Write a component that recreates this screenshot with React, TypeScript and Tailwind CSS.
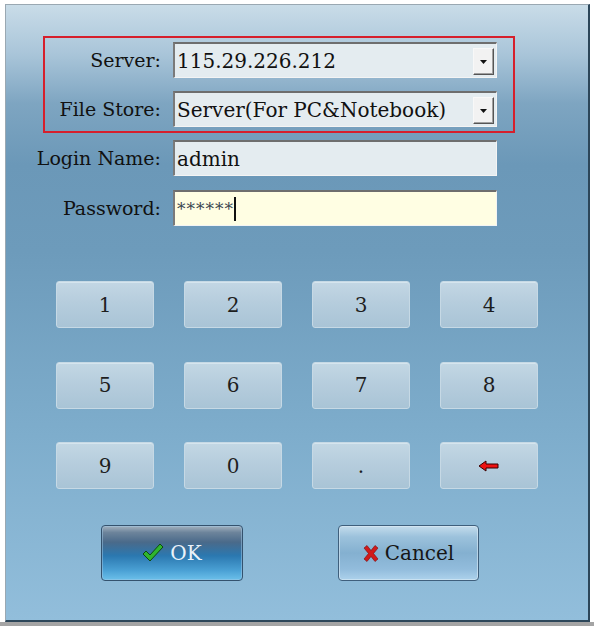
import type React from "react";

const keys = ["1", "2", "3", "4", "5", "6", "7", "8", "9", "0", ".", "back"];

function DropButton(): React.ReactElement {
  return (
    <div className="absolute right-[2px] top-[4px] w-[21px] h-[27px] bg-[#f2f2f2] border border-[#f8f8f8] border-r-[#555] border-b-[#555] shadow-[inset_-1px_-1px_0_#a0a0a0] flex items-center justify-center">
      <svg width="7" height="4" viewBox="0 0 7 4">
        <path d="M0 0 H7 L3.5 4 Z" fill="#111" />
      </svg>
    </div>
  );
}

function Field({ value, drop, yellow, cursor }: { value: string; drop?: boolean; yellow?: boolean; cursor?: boolean }): React.ReactElement {
  return (
    <div
      className={`relative w-[324px] h-[36px] border-t-2 border-l-2 border-t-[#6e6e6e] border-l-[#7a7a7a] border-r border-b border-r-[#f4f4f4] border-b-[#f4f4f4] flex items-center pl-[2px] text-[20px] text-[#111] ${yellow ? "bg-[#fffee3]" : "bg-[#e4ecf0]"}`}
    >
      {cursor ? (
        <span className="flex items-center h-[24px]">
          <span className="text-[17px] text-[#3a4550] tracking-[1px] leading-none mt-[2px]">******</span>
          <span className="w-[2px] h-[24px] bg-[#111]" />
        </span>
      ) : (
        <span className="leading-none">{value}</span>
      )}
      {drop && <DropButton />}
    </div>
  );
}

function Row({ label, labelW, children }: { label: string; labelW: string; children: React.ReactNode }): React.ReactElement {
  return (
    <div className="flex items-center gap-[12px]">
      <div className={`${labelW} text-right whitespace-nowrap text-[19px] text-[#111]`}>{label}</div>
      {children}
    </div>
  );
}

function BackArrow(): React.ReactElement {
  return (
    <svg width="22" height="12" viewBox="0 0 22 12">
      <path d="M1 6 L8 1 V4 H20 V8 H8 V11 Z" fill="#ee1111" stroke="#3a0000" strokeWidth="1" strokeLinejoin="round" />
    </svg>
  );
}

export default function App(): React.ReactElement {
  return (
    <div className="w-[594px] h-[626px] bg-white flex flex-col font-['DejaVu_Serif',serif] overflow-hidden">
      <div className="ml-[5px] mt-[4px] w-[585px] h-[618px] border-t border-l border-[#9aa8b2] border-r-2 border-b-2 border-r-[#2c4659] border-b-[#2c4659] bg-[linear-gradient(180deg,#c9dce8_0%,#a9c5d9_8%,#7ea5c1_16%,#6b98b8_26%,#6d9bbb_40%,#7eadcc_70%,#92bedb_100%)]">
        <div className="ml-[37px] mt-[31px] w-[472px] border-2 border-[#d61f2c] pt-[4px] pb-[4px] flex flex-col gap-[13px]">
          <Row label="Server:" labelW="w-[116px]">
            <Field value="115.29.226.212" drop />
          </Row>
          <Row label="File Store:" labelW="w-[116px]">
            <Field value="Server(For PC&Notebook)" drop />
          </Row>
        </div>
        <div className="ml-[19px] mt-[7px] flex flex-col gap-[14px]">
          <Row label="Login Name:" labelW="w-[136px]">
            <Field value="admin" />
          </Row>
          <Row label="Password:" labelW="w-[136px]">
            <Field value="" yellow cursor />
          </Row>
        </div>
        <div className="ml-[50px] mt-[55px] w-[482px] grid grid-cols-4 gap-x-[30px] gap-y-[33.5px]">
          {keys.map((k) => (
            <div
              key={k}
              className="h-[47px] rounded-[3px] border border-[#c6d9e5] bg-[linear-gradient(180deg,#c3d7e4_0%,#b6cddd_45%,#a9c4d6_100%)] shadow-[inset_0_1px_0_#d6e5ee] flex items-center justify-center text-[20px] text-[#1e1e1e]"
            >
              {k === "back" ? <BackArrow /> : k}
            </div>
          ))}
        </div>
        <div className="mt-[36px] flex">
          <div className="ml-[95px] w-[142px] h-[56px] rounded-[4px] border border-[#34526e] bg-[linear-gradient(180deg,#a4b2bf_0%,#6d849b_12%,#4a6a8a_30%,#2b78b0_55%,#4aa0d4_82%,#6cc0ea_100%)] shadow-[inset_0_0_0_1px_rgba(160,200,230,0.5)] flex items-center justify-center gap-[6px] text-[20px] text-[#eaf2f9]">
            <svg width="22" height="20" viewBox="0 0 22 20">
              <path d="M1 11 L4 8 L8 12 L18 1 L21 4 L8 18 Z" fill="#2fb52f" stroke="#0e4a0e" strokeWidth="1" strokeLinejoin="round" />
            </svg>
            <span>OK</span>
          </div>
          <div className="ml-[95px] w-[141px] h-[56px] rounded-[4px] border border-[#3f5f7c] bg-[linear-gradient(180deg,#c4dcec_0%,#9cc2dc_20%,#84b0d0_50%,#92bcdc_80%,#add2ec_100%)] shadow-[inset_0_0_0_1px_rgba(220,235,245,0.6)] flex items-center justify-center gap-[6px] text-[20px] text-[#161616]">
            <svg width="16" height="17" viewBox="0 0 16 17">
              <path d="M1 3 L4 0.5 L8 5.5 L12 0.5 L15 3 L10.5 8.5 L15 14 L12 16.5 L8 11.5 L4 16.5 L1 14 L5.5 8.5 Z" fill="#d11a1a" stroke="#7a0808" strokeWidth="0.6" strokeLinejoin="round" />
            </svg>
            <span>Cancel</span>
          </div>
        </div>
      </div>
      <div className="flex-1 bg-[#a4a4a4]" />
    </div>
  );
}
